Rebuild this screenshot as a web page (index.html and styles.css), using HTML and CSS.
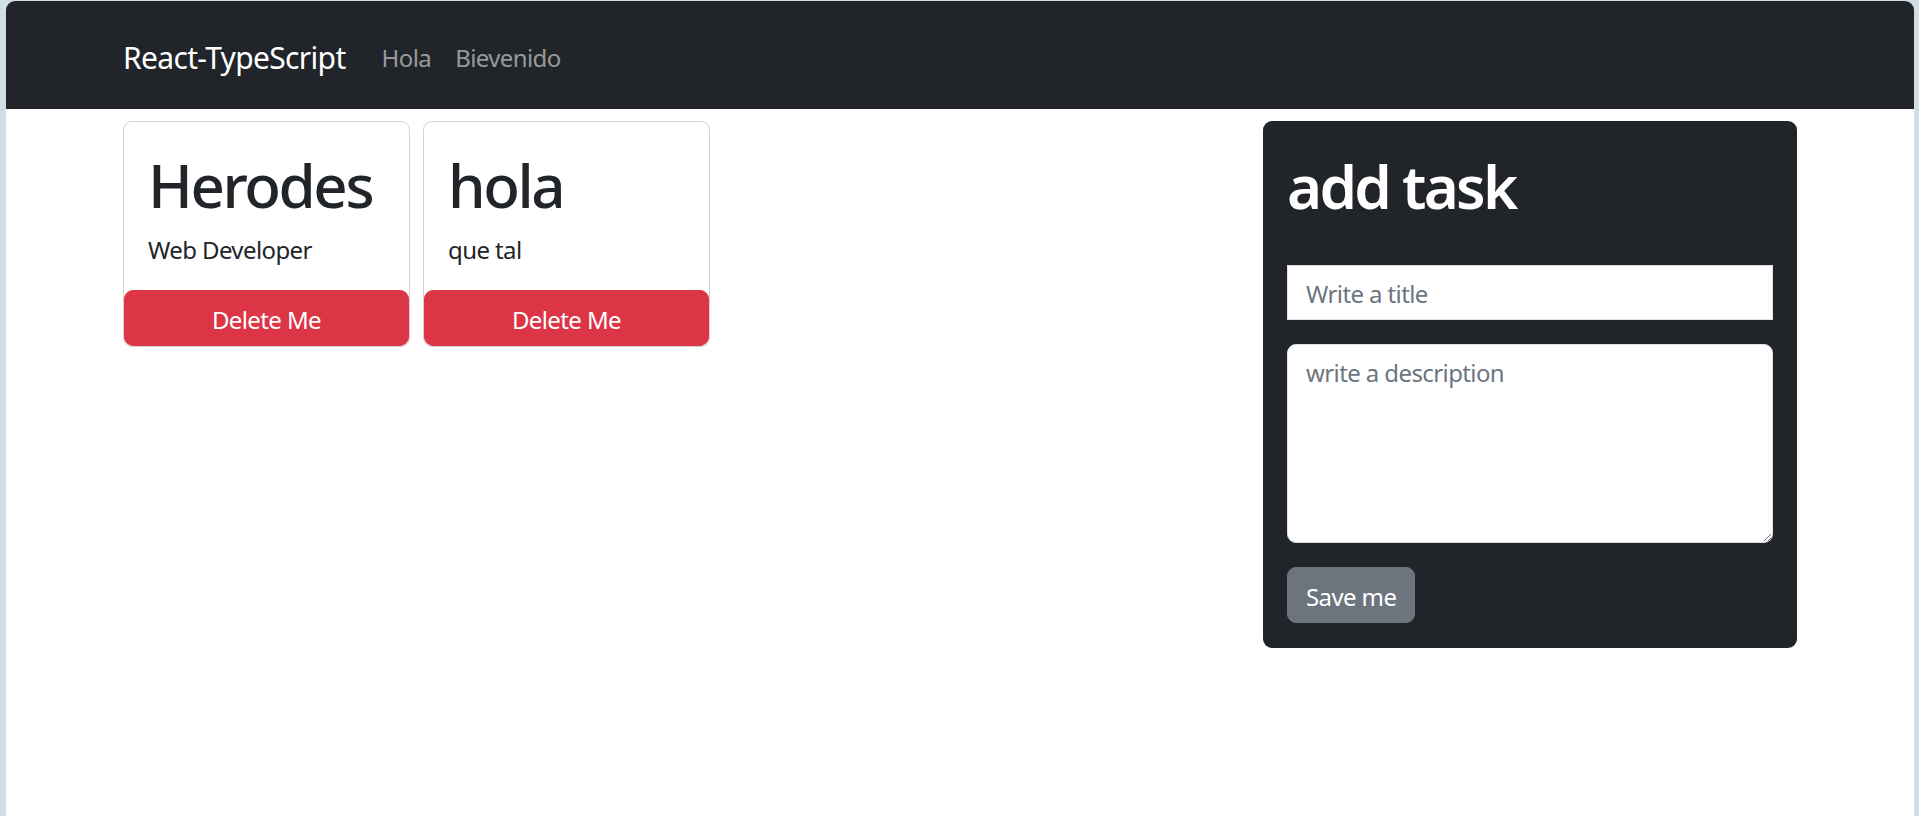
FILE: index.html
```html
<!DOCTYPE html>
<html lang="en">
<head>
<meta charset="utf-8">
<title>React-TypeScript</title>
<link rel="stylesheet" href="styles.css">
</head>
<body>
<div class="window">
  <nav class="navbar">
    <div class="container nav-inner">
      <a class="brand" href="#">React-TypeScript</a>
      <ul class="nav">
        <li><a class="nav-link" href="#">Hola</a></li>
        <li><a class="nav-link" href="#">Bievenido</a></li>
      </ul>
    </div>
  </nav>
  <main class="container main">
    <section class="cards">
      <div class="card">
        <div class="card-body">
          <h1 class="card-title">Herodes</h1>
          <p class="card-text">Web Developer</p>
        </div>
        <button class="btn btn-danger">Delete Me</button>
      </div>
      <div class="card">
        <div class="card-body">
          <h1 class="card-title">hola</h1>
          <p class="card-text">que tal</p>
        </div>
        <button class="btn btn-danger">Delete Me</button>
      </div>
    </section>
    <aside class="task-panel">
      <h1 class="panel-title">add task</h1>
      <form class="task-form">
        <input class="form-input" type="text" placeholder="Write a title">
        <textarea class="form-textarea" placeholder="write a description"></textarea>
        <button class="btn btn-secondary" type="button">Save me</button>
      </form>
    </aside>
  </main>
</div>
</body>
</html>
```
FILE: styles.css
```css
html, body {
  margin: 0;
  padding: 0;
  height: 100%;
}
body {
  background: #d3dde6;
  font-family: "Noto Sans", "Open Sans", sans-serif;
  font-size: 24px;
  line-height: 1.5;
  letter-spacing: -0.025em;
  color: #212529;
}
.window {
  margin: 1px 5px 0 6px;
  min-height: calc(100vh - 1px);
  background: #fff;
  border-radius: 9px 9px 0 0;
  overflow: hidden;
}
.container {
  width: 1674px;
  margin: 0 auto;
}
.navbar {
  background: #212529;
  height: 108px;
  box-sizing: border-box;
  padding-top: 5px;
  display: flex;
  align-items: center;
}
.nav-inner {
  display: flex;
  align-items: center;
}
.brand {
  color: #fff;
  text-decoration: none;
  font-size: 30px;
  line-height: 45px;
  letter-spacing: -0.022em;
  margin-right: 24px;
}
.nav {
  display: flex;
  list-style: none;
  margin: 0;
  padding: 0;
}
.nav-link {
  display: block;
  padding: 12px 12px;
  color: rgba(255, 255, 255, 0.55);
  text-decoration: none;
  font-size: 24px;
  line-height: 36px;
}
.main {
  display: flex;
  justify-content: space-between;
  align-items: flex-start;
  padding-top: 12px;
}
.cards {
  display: flex;
  gap: 13px;
  align-items: flex-start;
}
.card {
  width: 287px;
  box-sizing: border-box;
  border: 1px solid rgba(0, 0, 0, 0.175);
  border-radius: 9px;
  display: flex;
  flex-direction: column;
  background: #fff;
}
.card-body {
  padding: 24px;
}
.card-title {
  margin: 0 0 12px;
  padding-top: 3px;
  height: 69px;
  font-size: 60px;
  font-weight: 500;
  line-height: 1.2;
  letter-spacing: -0.04em;
}
.card-text {
  margin: 0;
  padding-top: 2px;
  height: 34px;
}
.btn {
  font-family: inherit;
  font-size: 24px;
  line-height: 36px;
  letter-spacing: -0.025em;
  padding: 11px 18px 7px;
  border-radius: 9px;
  cursor: pointer;
  color: #fff;
}
.btn-danger {
  width: 100%;
  background: #dc3545;
  border: 1px solid #dc3545;
}
.btn-secondary {
  align-self: flex-start;
  background: #6c757d;
  border: 1px solid #6c757d;
}
.task-panel {
  width: 534px;
  box-sizing: border-box;
  background: #212529;
  border-radius: 9px;
  padding: 24px 24px 25px;
}
.panel-title {
  margin: 0 0 48px;
  padding-top: 5px;
  height: 67px;
  color: #fff;
  font-size: 60px;
  font-weight: 600;
  line-height: 1.2;
  letter-spacing: -0.045em;
}
.task-form {
  display: flex;
  flex-direction: column;
  gap: 24px;
}
.form-input,
.form-textarea {
  font-family: inherit;
  font-size: 24px;
  line-height: 36px;
  letter-spacing: -0.025em;
  padding: 10px 18px 8px;
  border: 1px solid #dee2e6;
  background: #fff;
  color: #212529;
  box-sizing: border-box;
  width: 100%;
  margin: 0;
}
.form-input {
  border-radius: 0;
  height: 55px;
}
.form-textarea {
  border-radius: 9px;
  height: 199px;
  resize: vertical;
}
.form-input::placeholder,
.form-textarea::placeholder {
  color: #6c757d;
}
```
